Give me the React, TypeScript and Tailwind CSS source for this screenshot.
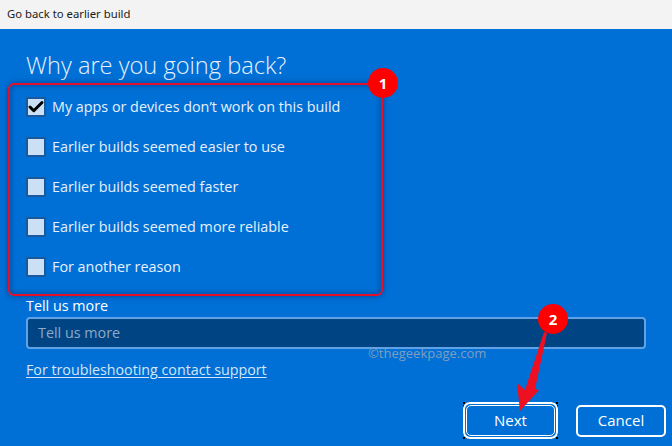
import { Check } from 'lucide-react';

const reasons = [
  'My apps or devices don\u2019t work on this build',
  'Earlier builds seemed easier to use',
  'Earlier builds seemed faster',
  'Earlier builds seemed more reliable',
  'For another reason',
];

function Badge({ n, className }: { n: number; className: string }) {
  return (
    <div className={`absolute w-[30px] h-[30px] rounded-full bg-[#fe0000] text-white flex items-center justify-center text-[15px] font-bold ${className}`}>
      {n}
    </div>
  );
}

export default function App() {
  return (
    <div className="relative w-[672px] h-[446px] overflow-hidden flex flex-col bg-[#0070d6] font-['Open_Sans','Noto_Sans',sans-serif]">
      <div className="h-[29px] bg-[#f3f3f3] pl-[7px] flex items-center text-[11.3px] text-[#1a1a1a] font-['Noto_Sans',sans-serif]">
        Go back to earlier build
      </div>

      <div className="flex-1 flex flex-col pl-[26px] pr-[26px] text-[#e8f1fb]">
        <h1 className="text-[23.6px] leading-[32px] font-light mt-[20px]">Why are you going back?</h1>

        <div className="flex flex-col gap-[20px] mt-[16px]">
          {reasons.map((r, i) => (
            <label key={r} className="flex items-center gap-[6px] h-[20px] text-[14.35px] font-normal">
              <span className="w-[20px] h-[20px] bg-[#cce0f5] border-2 border-[#1a5a9c] flex items-center justify-center shrink-0">
                {i === 0 && <Check className="w-[18px] h-[18px] text-black shrink-0" strokeWidth={4} />}
              </span>
              {r}
            </label>
          ))}
        </div>

        <div className="text-[14.35px] leading-[20px] text-white mt-[19px]">Tell us more</div>
        <div className="h-[32px] mt-px bg-[#004484] border-2 border-[#5fa2e6] rounded-[4px] flex items-center pl-[10px] text-[14.35px] text-[#8fa9c4]">
          Tell us more
        </div>
        <a className="self-start mt-[11px] text-[14.25px] leading-[19px] text-[#d5e6f8] underline underline-offset-2">
          For troubleshooting contact support
        </a>

        <div className="flex justify-end items-center gap-[18px] mt-[23px] -mr-[20px] text-[15px] text-white">
          <div className="w-[95px] h-[37px] border-2 border-dotted border-black">
            <div className="-m-[2px] h-[37px] w-[95px] border-2 border-white rounded-[7px] p-px">
              <div className="w-full h-full border-[1.5px] border-white rounded-[5px] flex items-center justify-center">Next</div>
            </div>
          </div>
          <div className="w-[90px] h-[32px] border-2 border-white rounded-[5px] flex items-center justify-center">Cancel</div>
        </div>
      </div>

      {/* annotations sit over the dialog */}
      <div className="absolute left-[8px] top-[83px] w-[375px] h-[213px] border-2 border-[#e3102a] rounded-[6px] shadow-[0_0_6px_rgba(0,40,110,0.6),inset_0_0_6px_rgba(0,40,110,0.6)]" />
      <Badge n={1} className="left-[368px] top-[68px]" />
      <div className="absolute left-[368px] top-[344px] text-[13px] text-[#7f9ebd]">©thegeekpage.com</div>
      <svg className="absolute left-[510px] top-[330px]" width="50" height="85" viewBox="0 0 50 85">
        <path d="M34 2 L37 3 L25 59 L29 60 L10 81 L7 53 L15 60 Z" fill="#ee0f20" />
      </svg>
      <Badge n={2} className="left-[538px] top-[304px]" />
    </div>
  );
}
